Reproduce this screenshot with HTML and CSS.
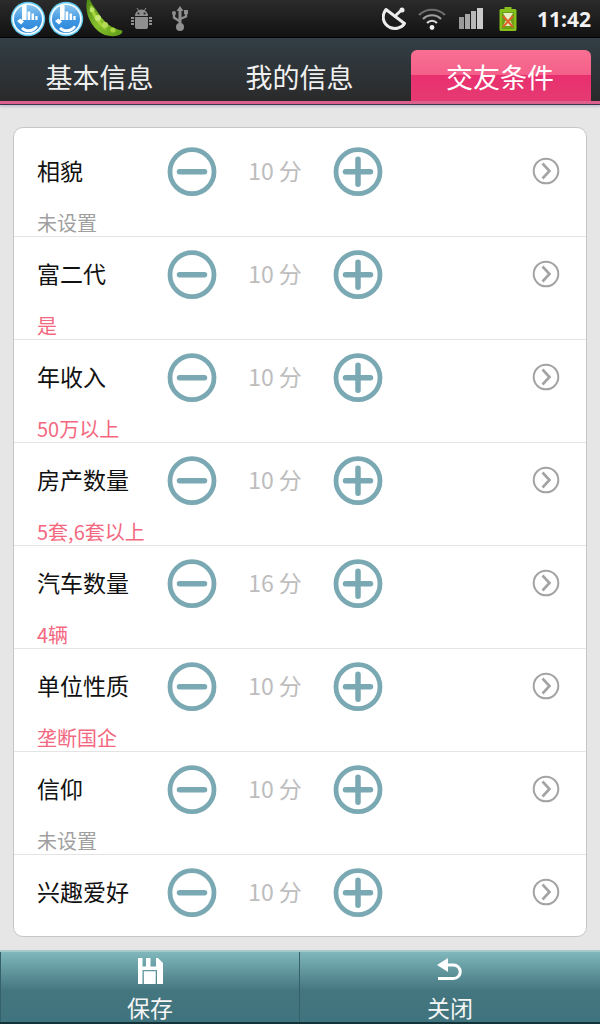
FILE: index.html
```html
<!DOCTYPE html>
<html lang="zh-CN">
<head>
<meta charset="utf-8">
<title>交友条件</title>
<link rel="stylesheet" href="styles.css">
</head>
<body>
<svg class="defs" width="0" height="0" aria-hidden="true">
  <defs>
    <linearGradient id="blue" x1="0" y1="0" x2="0" y2="1">
      <stop offset="0" stop-color="#8cc6ee"/>
      <stop offset="0.55" stop-color="#3f97e2"/>
      <stop offset="1" stop-color="#2b86d8"/>
    </linearGradient>
    <linearGradient id="pod" x1="0" y1="0" x2="1" y2="1">
      <stop offset="0" stop-color="#4f8a16"/>
      <stop offset="0.5" stop-color="#86c02c"/>
      <stop offset="1" stop-color="#5d9a18"/>
    </linearGradient>
    <symbol id="minus" viewBox="0 0 50 50">
      <circle cx="25" cy="24.700" r="22" fill="none" stroke="#7aa9b3" stroke-width="4.800"/>
      <path d="M12.500 24.700H37.500" fill="none" stroke="#7aa9b3" stroke-width="5.500" stroke-linecap="round"/>
    </symbol>
    <symbol id="plus" viewBox="0 0 50 50">
      <circle cx="25" cy="24.700" r="22" fill="none" stroke="#7aa9b3" stroke-width="4.800"/>
      <path d="M12.500 24.700H37.500M25 12.200V37.200" fill="none" stroke="#7aa9b3" stroke-width="5.500" stroke-linecap="round"/>
    </symbol>
    <symbol id="arrow" viewBox="0 0 28 28">
      <circle cx="14" cy="14" r="12.300" fill="none" stroke="#a3a3a3" stroke-width="2"/>
      <path d="M10.500 6.500 17.500 14 10.500 21.500" fill="none" stroke="#a3a3a3" stroke-width="2.600"/>
    </symbol>
    <symbol id="smile" viewBox="0 0 36 36">
      <circle cx="18" cy="18" r="17.200" fill="#5cc8ee"/>
      <circle cx="18" cy="18" r="15.800" fill="#f2fafe"/>
      <circle cx="18" cy="18" r="14" fill="url(#blue)"/>
      <path d="M12 5.500a2.300 2.300 0 0 1 4.600 0V19H12Z" fill="#fff"/>
      <path d="M17.500 10.500h2.800V19h-2.800ZM21.500 12.500h2.600V19h-2.600ZM25.300 15h2.300v4h-2.300Z" fill="#fff"/>
      <path d="M7 20l3.500-2.500L14 20.500l-3 3Z" fill="#fff"/>
      <path d="M13 26c4 3.500 9 3 13-1.500l2 1.500c-4 6.500-12 7-17 2Z" fill="#fff"/>
    </symbol>
  </defs>
</svg>

<header class="status">
  <div class="status-left">
    <svg class="smile" width="36" height="36"><use href="#smile"/></svg>
    <svg class="smile" width="36" height="36"><use href="#smile"/></svg>
    <svg class="pea" width="38" height="38" viewBox="0 0 38 38">
      <path d="M2 0C0 10 3 22 13 31C20 37 32 38 37 33C38 31 37 30 35 30C26 28 19 22 14 14C11 9 7 5 5 0Z" fill="url(#pod)"/>
      <path d="M5 6C6 14 11 24 22 31C17 24 11 15 7 6Z" fill="#a6d43c"/>
      <circle cx="7" cy="10" r="2.400" fill="#bfe46a"/>
      <circle cx="13" cy="18" r="3" fill="#c8e878"/>
      <circle cx="20" cy="25" r="3" fill="#b4dc58"/>
      <circle cx="28" cy="30" r="2.600" fill="#a6d43c"/>
    </svg>
    <svg class="android" width="21" height="21" viewBox="0 0 21 21">
      <path d="M4 8a6.500 6.500 0 0 1 13 0Z" fill="#8f8f8f"/>
      <path d="M6 0 8 3M15 0 13 3" stroke="#8f8f8f" stroke-width="1"/>
      <path d="M4 9h13v10a2 2 0 0 1-2 2H6a2 2 0 0 1-2-2Z" fill="#8f8f8f"/>
      <path d="M0 9h3v2H0ZM0 12h3v2H0ZM0 15h3v2H0ZM18 9h3v2h-3ZM18 12h3v2h-3ZM18 15h3v2h-3Z" fill="#8f8f8f"/>
      <circle cx="7.500" cy="5.500" r="1" fill="#222"/>
      <circle cx="13.500" cy="5.500" r="1" fill="#222"/>
    </svg>
    <svg class="usb" width="16" height="25" viewBox="0 0 16 25">
      <path d="M8 0 11.500 5H9.500V19H6.500V5H4.500Z" fill="#8f8f8f"/>
      <path d="M2 8V11.500L8 15.500M14 7V10.500L8 13" fill="none" stroke="#8f8f8f" stroke-width="2.400"/>
      <circle cx="2" cy="7" r="2" fill="#8f8f8f"/>
      <path d="M12 4h4v4h-4Z" fill="#8f8f8f"/>
      <circle cx="8" cy="21" r="4" fill="#8f8f8f"/>
    </svg>
  </div>
  <div class="status-right">
    <svg class="dish" width="24" height="23" viewBox="0 0 24 23">
      <path d="M4 2.500C-1 9 1 17 8 20.500C13 22.500 20 21 22.500 16.500Z" fill="none" stroke="#ececec" stroke-width="3" stroke-linejoin="round"/>
      <path d="M12 10 19 3.500" stroke="#ececec" stroke-width="3"/>
      <circle cx="20" cy="3" r="2.500" fill="#ececec"/>
    </svg>
    <svg class="wifi" width="28" height="22" viewBox="0 0 28 22">
      <path d="M1 7C8 0 20 0 27 7" fill="none" stroke="#6f6f6f" stroke-width="2.200"/>
      <path d="M5 11C10 6 18 6 23 11" fill="none" stroke="#a0a0a0" stroke-width="2.200"/>
      <path d="M9 15C12 12 16 12 19 15" fill="none" stroke="#d8d8d8" stroke-width="2.200"/>
      <circle cx="14" cy="19.500" r="2.400" fill="#f0f0f0"/>
    </svg>
    <svg class="signal" width="24" height="21" viewBox="0 0 24 21">
      <path d="M0 9h5v12H0Z" fill="#9a9a9a"/>
      <path d="M6 6h5v15H6Z" fill="#a8a8a8"/>
      <path d="M12 3h5v18h-5Z" fill="#b8b8b8"/>
      <path d="M18 0h6v21h-6Z" fill="#cacaca"/>
    </svg>
    <svg class="battery" width="18" height="24" viewBox="0 0 18 24">
      <path d="M5.500 0h7v2h-7Z" fill="#86c01c"/>
      <rect x="0.500" y="2" width="17" height="22" rx="1.500" fill="#86c01c"/>
      <rect x="3" y="5" width="12" height="17" fill="#6d9f14"/>
      <path d="M4 6h10l-3.500 6 3.500 7H4l3.500-7Z" fill="#e6efc4"/>
      <path d="M4 9 14 20M14 9 4 20" stroke="#e2602a" stroke-width="2"/>
    </svg>
    <span class="time">11:42</span>
  </div>
</header>

<nav class="tabs">
  <a class="tab tab-first">基本信息</a>
  <a class="tab tab-second">我的信息</a>
  <a class="tab tab-active">交友条件</a>
</nav>

<main class="content">
  <section class="card">
    <article class="row">
      <div class="row-main"><span class="name">相貌</span><svg class="btn"><use href="#minus"/></svg><span class="score">10 分</span><svg class="btn"><use href="#plus"/></svg><svg class="go"><use href="#arrow"/></svg></div>
      <p class="sub">未设置</p>
    </article>
    <article class="row">
      <div class="row-main"><span class="name">富二代</span><svg class="btn"><use href="#minus"/></svg><span class="score">10 分</span><svg class="btn"><use href="#plus"/></svg><svg class="go"><use href="#arrow"/></svg></div>
      <p class="sub sub-set">是</p>
    </article>
    <article class="row">
      <div class="row-main"><span class="name">年收入</span><svg class="btn"><use href="#minus"/></svg><span class="score">10 分</span><svg class="btn"><use href="#plus"/></svg><svg class="go"><use href="#arrow"/></svg></div>
      <p class="sub sub-set">50万以上</p>
    </article>
    <article class="row">
      <div class="row-main"><span class="name">房产数量</span><svg class="btn"><use href="#minus"/></svg><span class="score">10 分</span><svg class="btn"><use href="#plus"/></svg><svg class="go"><use href="#arrow"/></svg></div>
      <p class="sub sub-set">5套,6套以上</p>
    </article>
    <article class="row">
      <div class="row-main"><span class="name">汽车数量</span><svg class="btn"><use href="#minus"/></svg><span class="score">16 分</span><svg class="btn"><use href="#plus"/></svg><svg class="go"><use href="#arrow"/></svg></div>
      <p class="sub sub-set">4辆</p>
    </article>
    <article class="row">
      <div class="row-main"><span class="name">单位性质</span><svg class="btn"><use href="#minus"/></svg><span class="score">10 分</span><svg class="btn"><use href="#plus"/></svg><svg class="go"><use href="#arrow"/></svg></div>
      <p class="sub sub-set">垄断国企</p>
    </article>
    <article class="row">
      <div class="row-main"><span class="name">信仰</span><svg class="btn"><use href="#minus"/></svg><span class="score">10 分</span><svg class="btn"><use href="#plus"/></svg><svg class="go"><use href="#arrow"/></svg></div>
      <p class="sub">未设置</p>
    </article>
    <article class="row row-last">
      <div class="row-main"><span class="name">兴趣爱好</span><svg class="btn"><use href="#minus"/></svg><span class="score">10 分</span><svg class="btn"><use href="#plus"/></svg><svg class="go"><use href="#arrow"/></svg></div>
    </article>
  </section>
</main>

<footer class="bottom">
  <button class="action action-save">
    <svg class="action-icon" width="26" height="26" viewBox="0 0 26 26">
      <path fill-rule="evenodd" d="M1 0H21L26 5V26H1ZM5.500 0V8.500H9V0ZM13.500 0V8.500H19V0ZM5.500 12V26H6.800V13.300H18.700V26H20V12Z" fill="#fff"/>
    </svg>
    <span>保存</span>
  </button>
  <button class="action action-close">
    <svg class="action-icon" width="26" height="26" viewBox="0 0 26 26">
      <path d="M0 7 11 0V14Z" fill="#fff"/>
      <path d="M9 7H16.500A6.500 6.500 0 0 1 16.500 20.500H1" fill="none" stroke="#fff" stroke-width="3"/>
    </svg>
    <span>关闭</span>
  </button>
</footer>
</body>
</html>
```
FILE: styles.css
```css
* { box-sizing: border-box; }
html, body { margin: 0; padding: 0; }
body {
  width: 600px;
  height: 1024px;
  overflow: hidden;
  background: #e6e6e6;
  font-family: "Noto Sans CJK SC", "Noto Sans", sans-serif;
  display: flex;
  flex-direction: column;
}
.defs { position: absolute; }

.status {
  height: 38px;
  flex: none;
  display: flex;
  justify-content: space-between;
  align-items: center;
  background: linear-gradient(#2b2b2b, #121212);
  border-bottom: 1px solid #000;
}
.status-left { display: flex; align-items: center; padding-left: 10px; }
.smile { margin-right: 2px; display: block; }
.pea { margin-left: -1px; display: block; }
.android { margin-left: 8px; display: block; }
.usb { margin-left: 20px; display: block; }
.status-right { display: flex; align-items: center; padding-right: 9px; }
.dish { margin-right: 12px; display: block; }
.wifi { margin-right: 13px; display: block; }
.signal { margin-right: 16px; display: block; }
.battery { margin-right: 20px; display: block; }
.time {
  font-family: "Open Sans", "Liberation Sans", sans-serif;
  font-weight: 700;
  font-size: 21px;
  color: #f2f2f2;
  margin-top: 1px;
}

.tabs {
  height: 66px;
  flex: none;
  display: flex;
  padding-top: 12px;
  background: linear-gradient(#323e45, #2a2a2a);
  border-bottom: 3px solid #dc5f8e;
  box-shadow: 0 1px 0 #3a3550, 0 3px 2px #c8c4d0;
}
.tab {
  display: flex;
  align-items: center;
  justify-content: center;
  padding-top: 1px;
  font-size: 27px;
  color: #f0f0f0;
}
.tab-first { width: 199px; }
.tab-second { width: 201px; }
.tab-active {
  width: 180px;
  margin-left: 11px;
  padding-right: 2px;
  border-radius: 6px 6px 0 0;
  color: #fff;
  background: linear-gradient(#f96f92 0, #f4608a 48%, #e9306f 50%, #e53a72 100%);
}

.content { flex: 1; padding: 23px 13px 13px; min-height: 0; }
.card {
  background: #fff;
  border: 1px solid #c6c6c6;
  border-radius: 10px;
  padding: 6px 0 18px;
}
.row { padding-top: 13px; border-bottom: 1px solid #e4e4e4; }
.row-last { border-bottom: 0; }
.row-main {
  height: 50px;
  display: flex;
  align-items: center;
  padding-left: 23px;
}
.name { width: 130px; padding-bottom: 4px; font-size: 23px; color: #111; line-height: 1; }
.btn { width: 50px; height: 50px; display: block; flex: none; }
.score {
  width: 116px;
  padding-bottom: 4px;
  text-align: center;
  font-size: 23px;
  color: #bdbdbd;
  line-height: 1;
}
.go { width: 28px; height: 28px; margin: 0 0 2px 149px; display: block; flex: none; }
.sub {
  margin: 0;
  height: 39px;
  padding: 14px 0 0 23px;
  font-size: 20px;
  line-height: 23px;
  color: #9f9f9f;
}
.sub-set { color: #f4687f; }

.bottom {
  height: 74px;
  flex: none;
  display: flex;
  background: linear-gradient(#7fb7bc 0, #44767f 55%, #3f737d 100%);
  border-top: 2px solid #a6c9cb;
  border-bottom: 2px solid #14323a;
}
.action {
  border: 0;
  background: none;
  color: #f5f5f5;
  font: inherit;
  font-size: 23px;
  line-height: 1;
  display: flex;
  flex-direction: column;
  align-items: center;
  justify-content: flex-start;
  padding: 6px 0 0;
  border-left: 1px solid #35616a;
}
.action-save { width: 299px; }
.action-close { width: 301px; }
.action-icon { display: block; margin-bottom: 12px; }
```
